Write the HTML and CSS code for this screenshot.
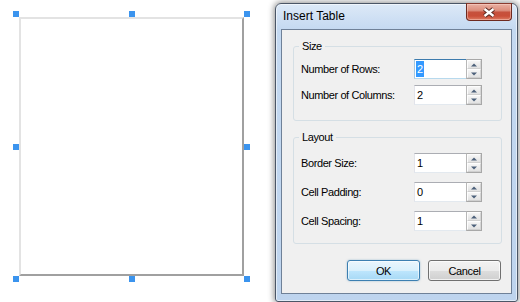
FILE: index.html
```html
<!DOCTYPE html>
<html>
<head>
<meta charset="utf-8">
<link rel="stylesheet" href="styles.css">
</head>
<body>
<div class="stage">
  <div class="canvas">
    <div class="frame">
      <span class="h tl"></span><span class="h tc"></span><span class="h tr"></span>
      <span class="h ml"></span><span class="h mr"></span>
      <span class="h bl"></span><span class="h bc"></span><span class="h br"></span>
    </div>
  </div>
  <div class="dialog">
    <div class="titlebar">
      <span class="title">Insert Table</span>
      <button class="close" aria-label="Close">
        <svg width="14" height="11" viewBox="-7 -5.5 14 11">
          <path d="M-4.5 -3.5 L4.5 3.5 M4.5 -3.5 L-4.5 3.5" stroke="#5a2a22" stroke-width="4.4" fill="none"/>
          <path d="M-4.5 -3.5 L4.5 3.5 M4.5 -3.5 L-4.5 3.5" stroke="#ffffff" stroke-width="2.4" fill="none"/>
        </svg>
      </button>
    </div>
    <div class="client">
      <fieldset class="group size">
        <legend>Size</legend>
        <div class="row">
          <span class="label">Number of Rows:</span>
          <div class="spin focus"><span class="val"><span class="sel">2</span></span><span class="arrows"><span class="arw up"></span><span class="arw dn"></span></span></div>
        </div>
        <div class="row">
          <span class="label">Number of Columns:</span>
          <div class="spin"><span class="val">2</span><span class="arrows"><span class="arw up"></span><span class="arw dn"></span></span></div>
        </div>
      </fieldset>
      <fieldset class="group layout">
        <legend>Layout</legend>
        <div class="row">
          <span class="label">Border Size:</span>
          <div class="spin"><span class="val">1</span><span class="arrows"><span class="arw up"></span><span class="arw dn"></span></span></div>
        </div>
        <div class="row">
          <span class="label">Cell Padding:</span>
          <div class="spin"><span class="val">0</span><span class="arrows"><span class="arw up"></span><span class="arw dn"></span></span></div>
        </div>
        <div class="row">
          <span class="label">Cell Spacing:</span>
          <div class="spin"><span class="val">1</span><span class="arrows"><span class="arw up"></span><span class="arw dn"></span></span></div>
        </div>
      </fieldset>
      <div class="buttons">
        <button class="btn ok">OK</button>
        <button class="btn">Cancel</button>
      </div>
    </div>
  </div>
</div>
</body>
</html>
```
FILE: styles.css
```css
* { box-sizing: border-box; }
html, body { margin: 0; padding: 0; }
body {
  width: 520px;
  height: 302px;
  overflow: hidden;
  background: #ffffff;
  font-family: "Liberation Sans", Arial, sans-serif;
  color: #000;
}
.stage {
  display: flex;
  align-items: flex-start;
  height: 302px;
}
.canvas {
  flex: none;
  width: 275px;
  padding: 17px 0 0 19px;
}
.frame {
  position: relative;
  width: 225px;
  height: 259px;
  border: 2px solid;
  border-color: #e3e3e3 #a0a0a0 #a0a0a0 #e3e3e3;
  background: #fff;
}
.h {
  position: absolute;
  width: 6px;
  height: 6px;
  background: #3b94ee;
}
.tl { left: -8px; top: -8px; }
.tc { left: calc(50% - 3px); top: -8px; }
.tr { right: -8px; top: -8px; }
.ml { left: -8px; top: calc(50% - 3px); }
.mr { right: -8px; top: calc(50% - 3px); }
.bl { left: -8px; bottom: -8px; }
.bc { left: calc(50% - 3px); bottom: -8px; }
.br { right: -8px; bottom: -8px; }

.dialog {
  flex: none;
  margin-top: 3px;
  width: 243px;
  height: 299px;
  border: 1px solid #4b5666;
  border-radius: 6px 6px 3px 3px;
  background: linear-gradient(180deg, #dde9f7 0px, #cfe0f4 14px, #c4d9f1 26px, #bed4ee 100%);
  box-shadow: 0 0 6px 1px rgba(0,0,0,0.45), inset 0 0 0 1px rgba(255,255,255,0.55);
  padding: 0 5px 7px 5px;
  display: flex;
  flex-direction: column;
}
.titlebar {
  height: 25px;
  display: flex;
  align-items: flex-start;
}
.title {
  font-size: 12px;
  line-height: 14px;
  margin: 5px 0 0 2px;
  color: #000;
}
.close {
  margin: -1px 0 0 auto;
  width: 46px;
  height: 18px;
  padding: 0;
  border: 1px solid #6e2a20;
  border-top-color: #8a3b30;
  border-radius: 0 0 4px 4px;
  background: linear-gradient(180deg, #eab0a2 0%, #dc8e7d 40%, #c6513d 52%, #c94e38 75%, #dd7c62 100%);
  box-shadow: inset 0 0 0 1px rgba(255,220,210,0.45);
  display: flex;
  align-items: center;
  justify-content: center;
}
.close svg { display: block; }

.client {
  flex: 1;
  background: #f0f0f0;
  border: 1px solid #6f8198;
  padding: 10px 9px 0 11px;
  display: flex;
  flex-direction: column;
}
.group {
  margin: 0;
  border: 1px solid #d5dfe5;
  border-radius: 3px;
  padding: 6px 18px 15px 7px;
  display: flex;
  flex-direction: column;
  gap: 6px;
  min-width: 0;
}
.group legend {
  font-size: 11px;
  line-height: 13px;
  letter-spacing: -0.4px;
  padding: 0 3px;
  margin-left: -2px;
}
.layout {
  margin-top: 10px;
  padding-top: 9px;
  padding-bottom: 12px;
  gap: 9px;
}
.row {
  display: flex;
  align-items: center;
  height: 20px;
}
.label {
  width: 113px;
  font-size: 11px;
  letter-spacing: -0.4px;
  white-space: nowrap;
}
.spin {
  display: flex;
  width: 68px;
  height: 20px;
}
.val {
  flex: 1;
  display: flex;
  align-items: center;
  background: #fff;
  border: 1px solid;
  border-color: #abadb3 #dbdfe6 #e3e9ef #e2e3ea;
  border-right: none;
  padding-left: 2px;
  font-size: 11px;
}
.focus .val {
  border-color: #3d7bad #a4c9e3 #b7d9ed #a4c9e3;
  padding-left: 1px;
}
.sel {
  display: inline-block;
  height: 16px;
  line-height: 16px;
  padding: 0 1px;
  background: #3399ff;
  color: #fff;
}
.arrows {
  width: 16px;
  display: flex;
  flex-direction: column;
  border: 1px solid #a8a8a8;
  border-left-color: #b8b8b8;
  background: #e8e8e8;
}
.arw {
  flex: 1;
  position: relative;
  background: linear-gradient(180deg, #f6f6f6, #e2e2e2);
  border: 1px solid #fdfdfd;
  border-right-color: #d6d6d6;
  border-bottom-color: #d0d0d0;
}
.arw::after {
  content: "";
  position: absolute;
  left: 50%;
  top: 50%;
  width: 0;
  height: 0;
  border-left: 3px solid transparent;
  border-right: 3px solid transparent;
  transform: translate(-50%, -50%);
}
.up::after { border-bottom: 3px solid #4c607a; }
.dn::after { border-top: 3px solid #4c607a; }

.buttons {
  margin-top: 16px;
  display: flex;
  justify-content: flex-end;
  gap: 8px;
  padding-right: 1px;
}
.btn {
  width: 73px;
  height: 21px;
  padding: 0;
  font-family: "Liberation Sans", Arial, sans-serif;
  font-size: 11px;
  letter-spacing: -0.4px;
  color: #000;
  border: 1px solid #707070;
  border-radius: 3px;
  background: linear-gradient(180deg, #f2f2f2 0%, #ebebeb 50%, #dddddd 51%, #cfcfcf 100%);
  box-shadow: inset 0 0 0 1px rgba(255,255,255,0.7);
}
.btn.ok {
  border-color: #3c7fb1;
  background: linear-gradient(180deg, #eaf6fd 0%, #d9f0fc 50%, #bee6fd 51%, #a7d9f5 100%);
  box-shadow: inset 0 0 0 1px rgba(255,255,255,0.6), 0 0 2px rgba(60,127,177,0.5);
}
```
